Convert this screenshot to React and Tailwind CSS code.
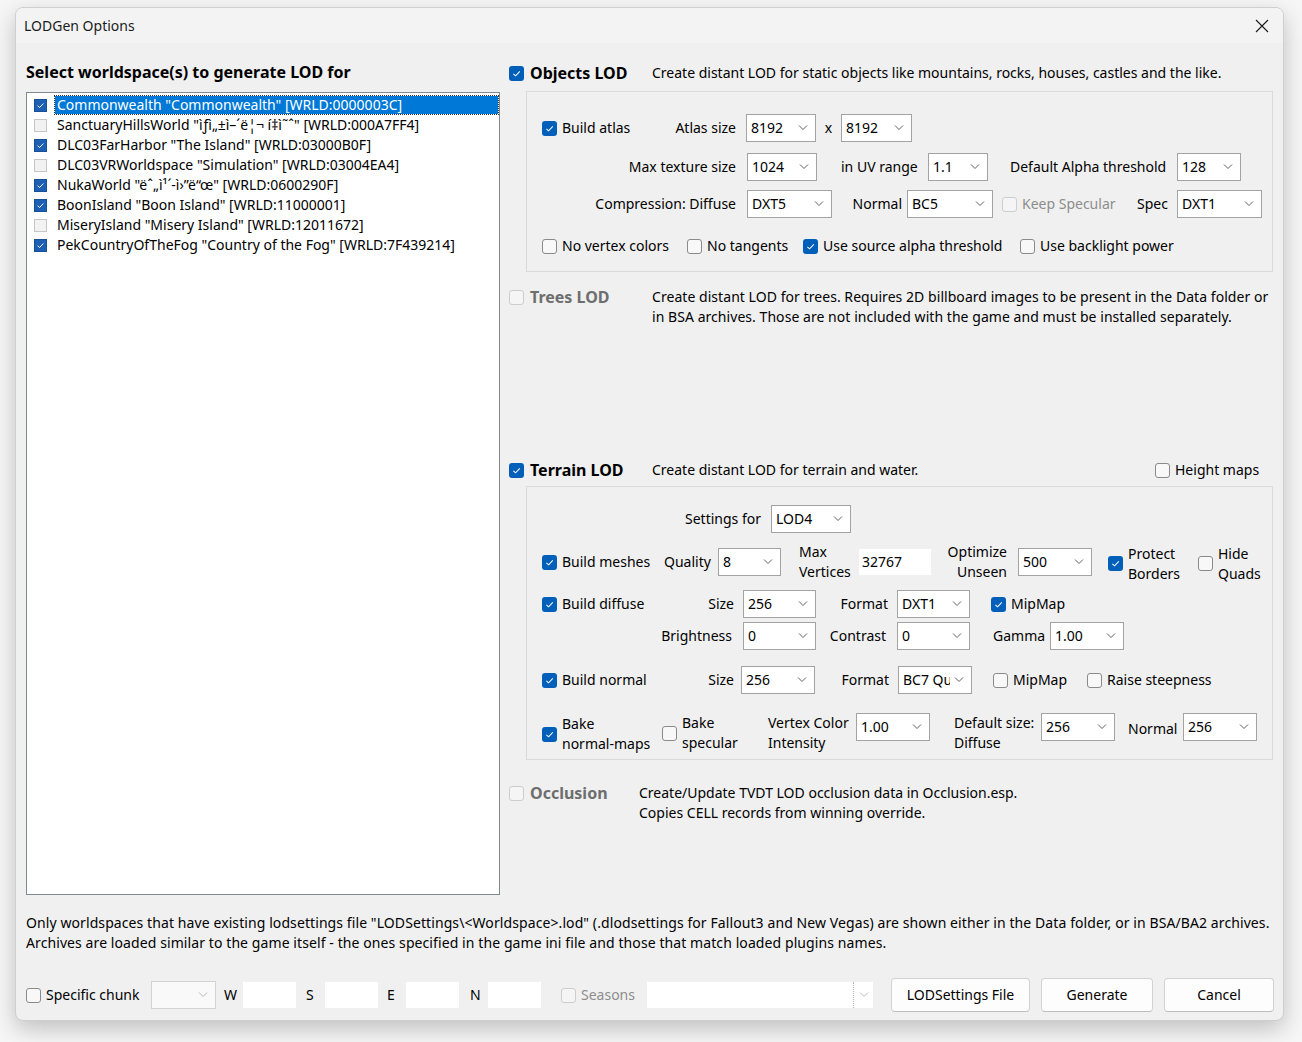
import React from "react";

const worlds = [
  { on: true, sel: true, text: 'Commonwealth "Commonwealth" [WRLD:0000003C]' },
  { on: false, text: 'SanctuaryHillsWorld "ìƒì„±ì–´ë¦¬ í‡ì˜ˆ" [WRLD:000A7FF4]' },
  { on: true, text: 'DLC03FarHarbor "The Island" [WRLD:03000B0F]' },
  { on: false, text: 'DLC03VRWorldspace "Simulation" [WRLD:03004EA4]' },
  { on: true, text: 'NukaWorld "ëˆ„ì¹´-ì›”ë“œ" [WRLD:0600290F]' },
  { on: true, text: 'BoonIsland "Boon Island" [WRLD:11000001]' },
  { on: false, text: 'MiseryIsland "Misery Island" [WRLD:12011672]' },
  { on: true, text: 'PekCountryOfTheFog "Country of the Fog" [WRLD:7F439214]' },
];

/** Win11 style checkbox square */
function Box({ checked, disabled }) {
  if (checked)
    return (
      <span className="w-[15px] h-[15px] rounded-[3px] bg-[#005fb8] flex items-center justify-center shrink-0">
        <svg width="11" height="11" viewBox="0 0 12 12">
          <path d="M2.6 6.3 L5 8.6 L9.6 3.7" fill="none" stroke="#fff" strokeWidth="1.1" />
        </svg>
      </span>
    );
  return (
    <span
      className={`w-[15px] h-[15px] rounded-[3px] border shrink-0 ${
        disabled ? "border-[#cdcdcd] bg-[#f5f5f5]" : "border-[#8a8a8a] bg-[#f8f8f8]"
      }`}
    />
  );
}

function Cb({ checked, disabled, children, className = "" }) {
  return (
    <div className={`flex items-center gap-[5px] shrink-0 ${className}`}>
      <Box checked={checked} disabled={disabled} />
      <span className={`whitespace-nowrap leading-[20px] ${disabled ? "text-[#8d8d8d]" : ""}`}>{children}</span>
    </div>
  );
}

function Chevron({ color = "#606060" }) {
  return (
    <svg width="10" height="6" viewBox="0 0 10 6" className="shrink-0">
      <path d="M1 0.5 L5 4.5 L9 0.5" fill="none" stroke={color} strokeWidth="1" />
    </svg>
  );
}

function Sel({ value, className = "", disabled }) {
  return (
    <div
      className={`h-[28px] border flex items-center pl-[4px] pr-[7px] gap-[4px] shrink-0 ${
        disabled ? "border-[#d3d3d3] bg-[#f9f9f9]" : "border-[#a3a3a3] bg-white"
      } ${className}`}
    >
      <span className="flex-1 whitespace-nowrap overflow-hidden">{value}</span>
      <Chevron color={disabled ? "#b8b8b8" : "#606060"} />
    </div>
  );
}

function Field({ value = "", className = "" }) {
  return (
    <div className={`h-[26px] bg-white flex items-center px-[3px] shrink-0 whitespace-nowrap ${className}`}>{value}</div>
  );
}

function Btn({ children, className = "" }) {
  return (
    <div
      className={`h-[34px] bg-[#fdfdfd] border border-[#d2d2d2] border-b-[#bdbdbd] rounded-[4px] flex items-center justify-center shrink-0 ${className}`}
    >
      {children}
    </div>
  );
}

function Lbl({ children, className = "" }) {
  return <span className={`whitespace-nowrap shrink-0 leading-[20px] ${className}`}>{children}</span>;
}

function Header({ checked, disabled, title, labelW, children }) {
  return (
    <div className="flex items-start">
      <div className="flex items-center h-[20px] shrink-0">
        <Box checked={checked} disabled={disabled} />
        <span
          className={`ml-[6px] font-bold text-[16px] whitespace-nowrap ${labelW} ${
            disabled ? "text-[#6e6e6e]" : "text-black"
          }`}
        >
          {title}
        </span>
      </div>
      {children}
    </div>
  );
}

export default function App() {
  return (
    <div className="w-[1302px] h-[1042px] bg-[#f6f6f6] pt-[7px] pl-[15px] font-['Noto_Sans',sans-serif] text-[14px] leading-[20px] text-black">
      <div className="w-[1269px] h-[1014px] rounded-[8px] border border-[#cfcfcf] shadow-[0_8px_22px_rgba(0,0,0,0.22)] bg-[#f0f0f0] overflow-hidden flex flex-col">
        {/* title bar */}
        <div className="h-[35px] bg-[#f3f3f3] flex items-center justify-between pl-[8px] pr-[14px] shrink-0">
          <span className="text-[14px] text-[#1b1b1b]">LODGen Options</span>
          <svg width="14" height="14" viewBox="0 0 14 14">
            <path d="M1 1 L13 13 M13 1 L1 13" stroke="#1b1b1b" strokeWidth="1.1" />
          </svg>
        </div>

        <div className="flex-1 px-[10px] pt-[19px] flex flex-col">
          <div className="flex gap-[9px]">
            {/* worldspace list */}
            <div className="w-[474px] flex flex-col shrink-0">
              <div className="h-[20px] font-bold text-[16px] whitespace-nowrap">Select worldspace(s) to generate LOD for</div>
              <div className="mt-[10px] h-[803px] border border-[#828790] bg-white pt-[2px]">
                {worlds.map((w) => (
                  <div key={w.text} className="h-[20px] flex items-center pl-[7px]">
                    {w.on ? (
                      <span className="w-[13px] h-[13px] bg-[#1c5fb3] border border-[#174f99] flex items-center justify-center shrink-0">
                        <svg width="9" height="9" viewBox="0 0 10 10">
                          <path d="M1.8 5.2 L4 7.2 L8.2 2.8" fill="none" stroke="#fff" strokeWidth="1.1" />
                        </svg>
                      </span>
                    ) : (
                      <span className="w-[13px] h-[13px] bg-[#f2f2f2] border border-[#c6c6c6] shrink-0" />
                    )}
                    <span
                      className={`ml-[8px] h-[18px] flex items-center px-[2px] whitespace-nowrap ${
                        w.sel ? "flex-1 mr-[1px] bg-[#0078d7] text-white outline outline-1 outline-dotted outline-[#333]" : ""
                      }`}
                    >
                      {w.text}
                    </span>
                  </div>
                ))}
              </div>
            </div>

            {/* options */}
            <div className="w-[764px] flex flex-col shrink-0">
              <div className="mt-[1px]">
                <Header checked title="Objects LOD" labelW="w-[122px]">
                  <span className="whitespace-nowrap">
                    Create distant LOD for static objects like mountains, rocks, houses, castles and the like.
                  </span>
                </Header>
              </div>

              <div className="ml-[17px] mt-[8px] w-[747px] border border-[#dadada] pl-[15px] pt-[22px] pb-[15px]">
                <div className="flex items-center h-[28px]">
                  <div className="w-[194px] flex items-center justify-between shrink-0">
                    <Cb checked>Build atlas</Cb>
                    <Lbl>Atlas size</Lbl>
                  </div>
                  <Sel value="8192" className="ml-[10px] w-[70px]" />
                  <Lbl className="w-[25px] text-center">x</Lbl>
                  <Sel value="8192" className="w-[71px]" />
                </div>
                <div className="flex items-center h-[28px] mt-[11px]">
                  <Lbl className="w-[194px] text-right">Max texture size</Lbl>
                  <Sel value="1024" className="ml-[11px] w-[70px]" />
                  <Lbl className="ml-[24px] w-[87px]">in UV range</Lbl>
                  <Sel value="1.1" className="w-[60px]" />
                  <Lbl className="ml-[22px] w-[167px]">Default Alpha threshold</Lbl>
                  <Sel value="128" className="w-[64px]" />
                </div>
                <div className="flex items-center h-[28px] mt-[9px]">
                  <Lbl className="w-[194px] text-right">Compression: Diffuse</Lbl>
                  <Sel value="DXT5" className="ml-[11px] w-[85px]" />
                  <Lbl className="w-[70px] text-right">Normal</Lbl>
                  <Sel value="BC5" className="ml-[5px] w-[86px]" />
                  <Cb disabled className="ml-[9px] w-[135px]">Keep Specular</Cb>
                  <Lbl className="w-[40px]">Spec</Lbl>
                  <Sel value="DXT1" className="w-[85px]" />
                </div>
                <div className="flex items-center h-[20px] mt-[18px]">
                  <Cb className="w-[145px]">No vertex colors</Cb>
                  <Cb className="w-[116px]">No tangents</Cb>
                  <Cb checked className="w-[217px]">Use source alpha threshold</Cb>
                  <Cb>Use backlight power</Cb>
                </div>
              </div>

              <div className="mt-[15px]">
                <Header disabled title="Trees LOD" labelW="w-[122px]">
                  <span className="whitespace-nowrap tracking-[0.05px]">
                    Create distant LOD for trees. Requires 2D billboard images to be present in the Data folder or
                    <br />
                    in BSA archives. Those are not included with the game and must be installed separately.
                  </span>
                </Header>
              </div>

              <div className="mt-[133px]">
                <Header checked title="Terrain LOD" labelW="w-[122px]">
                  <span className="whitespace-nowrap w-[503px]">Create distant LOD for terrain and water.</span>
                  <Cb>Height maps</Cb>
                </Header>
              </div>

              <div className="ml-[17px] mt-[6px] w-[747px] border border-[#dadada] pl-[15px] pt-[18px] pb-[6px]">
                <div className="flex items-center h-[28px]">
                  <Lbl className="w-[219px] text-right">Settings for</Lbl>
                  <Sel value="LOD4" className="ml-[10px] w-[80px]" />
                </div>
                <div className="flex items-center h-[40px] mt-[9px]">
                  <Cb checked className="w-[122px]">Build meshes</Cb>
                  <Lbl className="w-[54px]">Quality</Lbl>
                  <Sel value="8" className="w-[63px]" />
                  <Lbl className="ml-[18px] w-[60px]">
                    Max
                    <br />
                    Vertices
                  </Lbl>
                  <Field value="32767" className="w-[72px] -mt-[1px]" />
                  <Lbl className="ml-[15px] w-[61px] text-right">
                    Optimize
                    <br />
                    Unseen
                  </Lbl>
                  <Sel value="500" className="ml-[11px] w-[74px]" />
                  <Cb checked className="ml-[16px] w-[90px] mt-[3px]">
                    Protect
                    <br />
                    Borders
                  </Cb>
                  <Cb className="mt-[3px]">
                    Hide
                    <br />
                    Quads
                  </Cb>
                </div>
                <div className="flex items-center h-[28px] mt-[8px]">
                  <div className="w-[192px] flex items-center justify-between shrink-0">
                    <Cb checked>Build diffuse</Cb>
                    <Lbl>Size</Lbl>
                  </div>
                  <Sel value="256" className="ml-[9px] w-[73px]" />
                  <Lbl className="w-[72px] text-right">Format</Lbl>
                  <Sel value="DXT1" className="ml-[9px] w-[73px]" />
                  <Cb checked className="ml-[21px]">MipMap</Cb>
                </div>
                <div className="flex items-center h-[28px] mt-[4px]">
                  <Lbl className="w-[190px] text-right">Brightness</Lbl>
                  <Sel value="0" className="ml-[11px] w-[73px]" />
                  <Lbl className="w-[70px] text-right">Contrast</Lbl>
                  <Sel value="0" className="ml-[11px] w-[73px]" />
                  <Lbl className="ml-[23px] w-[57px]">Gamma</Lbl>
                  <Sel value="1.00" className="w-[74px]" />
                </div>
                <div className="flex items-center h-[28px] mt-[16px]">
                  <div className="w-[192px] flex items-center justify-between shrink-0">
                    <Cb checked>Build normal</Cb>
                    <Lbl>Size</Lbl>
                  </div>
                  <Sel value="256" className="ml-[7px] w-[74px]" />
                  <Lbl className="w-[74px] text-right">Format</Lbl>
                  <Sel value="BC7 Quality" className="ml-[9px] w-[74px]" />
                  <Cb className="ml-[21px] w-[94px]">MipMap</Cb>
                  <Cb>Raise steepness</Cb>
                </div>
                <div className="flex items-start h-[40px] mt-[19px]">
                  <Cb checked className="w-[120px] h-[40px] mt-[1px]">
                    Bake
                    <br />
                    normal-maps
                  </Cb>
                  <Cb className="w-[106px] h-[40px]">
                    Bake
                    <br />
                    specular
                  </Cb>
                  <Lbl className="w-[88px]">
                    Vertex Color
                    <br />
                    Intensity
                  </Lbl>
                  <Sel value="1.00" className="w-[74px]" />
                  <Lbl className="ml-[24px] w-[87px]">
                    Default size:
                    <br />
                    Diffuse
                  </Lbl>
                  <Sel value="256" className="w-[74px]" />
                  <Lbl className="ml-[13px] w-[55px] mt-[6px]">Normal</Lbl>
                  <Sel value="256" className="w-[74px]" />
                </div>
              </div>

              <div className="mt-[23px]">
                <Header disabled title="Occlusion" labelW="w-[109px]">
                  <span className="whitespace-nowrap">
                    Create/Update TVDT LOD occlusion data in Occlusion.esp.
                    <br />
                    Copies CELL records from winning override.
                  </span>
                </Header>
              </div>
            </div>
          </div>

          {/* info text */}
          <div className="mt-[18px] whitespace-nowrap tracking-[0.09px]">
            {'Only worldspaces that have existing lodsettings file "LODSettings\\<Worldspace>.lod" (.dlodsettings for Fallout3 and New Vegas) are shown either in the Data folder, or in BSA/BA2 archives.'}
            <br />
            Archives are loaded similar to the game itself - the ones specified in the game ini file and those that match loaded plugins names.
          </div>

          {/* bottom bar */}
          <div className="mt-[25px] h-[34px] flex items-center">
            <Cb className="w-[125px]">Specific chunk</Cb>
            <Sel disabled className="w-[65px]" />
            <Lbl className="w-[27px] pl-[8px]">W</Lbl>
            <Field className="w-[53px]" />
            <Lbl className="w-[29px] pl-[10px]">S</Lbl>
            <Field className="w-[53px]" />
            <Lbl className="w-[28px] pl-[9px]">E</Lbl>
            <Field className="w-[53px]" />
            <Lbl className="w-[29px] pl-[11px]">N</Lbl>
            <Field className="w-[53px]" />
            <Cb disabled className="ml-[20px] w-[86px]">Seasons</Cb>
            <div className="w-[226px] h-[26px] bg-white flex justify-end shrink-0">
              <div className="w-[20px] h-[26px] border-l border-dotted border-[#b5b5b5] flex items-center justify-center">
                <Chevron color="#b8b8b8" />
              </div>
            </div>
            <Btn className="ml-[18px] w-[139px]">LODSettings File</Btn>
            <Btn className="ml-[11px] w-[112px]">Generate</Btn>
            <Btn className="ml-[11px] w-[110px]">Cancel</Btn>
          </div>
        </div>
      </div>
    </div>
  );
}
